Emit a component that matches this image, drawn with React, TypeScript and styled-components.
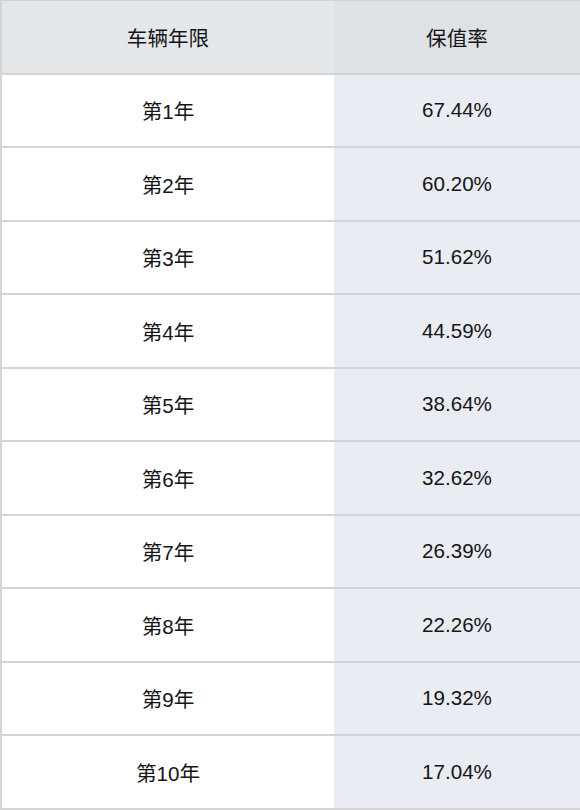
import React from "react";
import styled, { createGlobalStyle } from "styled-components";

const rows: [string, string][] = [
    ["第1年", "67.44%"],
    ["第2年", "60.20%"],
    ["第3年", "51.62%"],
    ["第4年", "44.59%"],
    ["第5年", "38.64%"],
    ["第6年", "32.62%"],
    ["第7年", "26.39%"],
    ["第8年", "22.26%"],
    ["第9年", "19.32%"],
    ["第10年", "17.04%"],
];

function App() {
    return (
        <>
            <GlobalStyle />
            <Table>
                <Row>
                    <Cell $bg="#e5e8eb">车辆年限</Cell>
                    <Cell $bg="#dfe2e5">保值率</Cell>
                </Row>
                {rows.map(([year, rate]) => (
                    <Row key={year}>
                        <Cell $bg="#ffffff">{year}</Cell>
                        <Cell $bg="#e9ecf3">{rate}</Cell>
                    </Row>
                ))}
            </Table>
        </>
    );
}

const GlobalStyle = createGlobalStyle`
    html, body {
        margin: 0;
        padding: 0;
        background: #ffffff;
    }
`;

const Table = styled.div`
    width: 580px;
    display: flex;
    flex-direction: column;
    border-top: 1px solid #d4d4d4;
    border-left: 2px solid #d4d4d4;
    box-sizing: border-box;
    font-family: "Liberation Sans", "Noto Sans CJK SC", Arial, sans-serif;
    font-size: 20.6px;
    color: #151515;
`;

const Row = styled.div`
    display: grid;
    grid-template-columns: 332px 1fr;
    height: 73.5px;
    box-sizing: border-box;
    border-bottom: 2px solid #d4d4d4;
`;

const Cell = styled.div<{ $bg: string }>`
    display: flex;
    align-items: center;
    justify-content: center;
    background: ${p => p.$bg};
`;

export default App;
